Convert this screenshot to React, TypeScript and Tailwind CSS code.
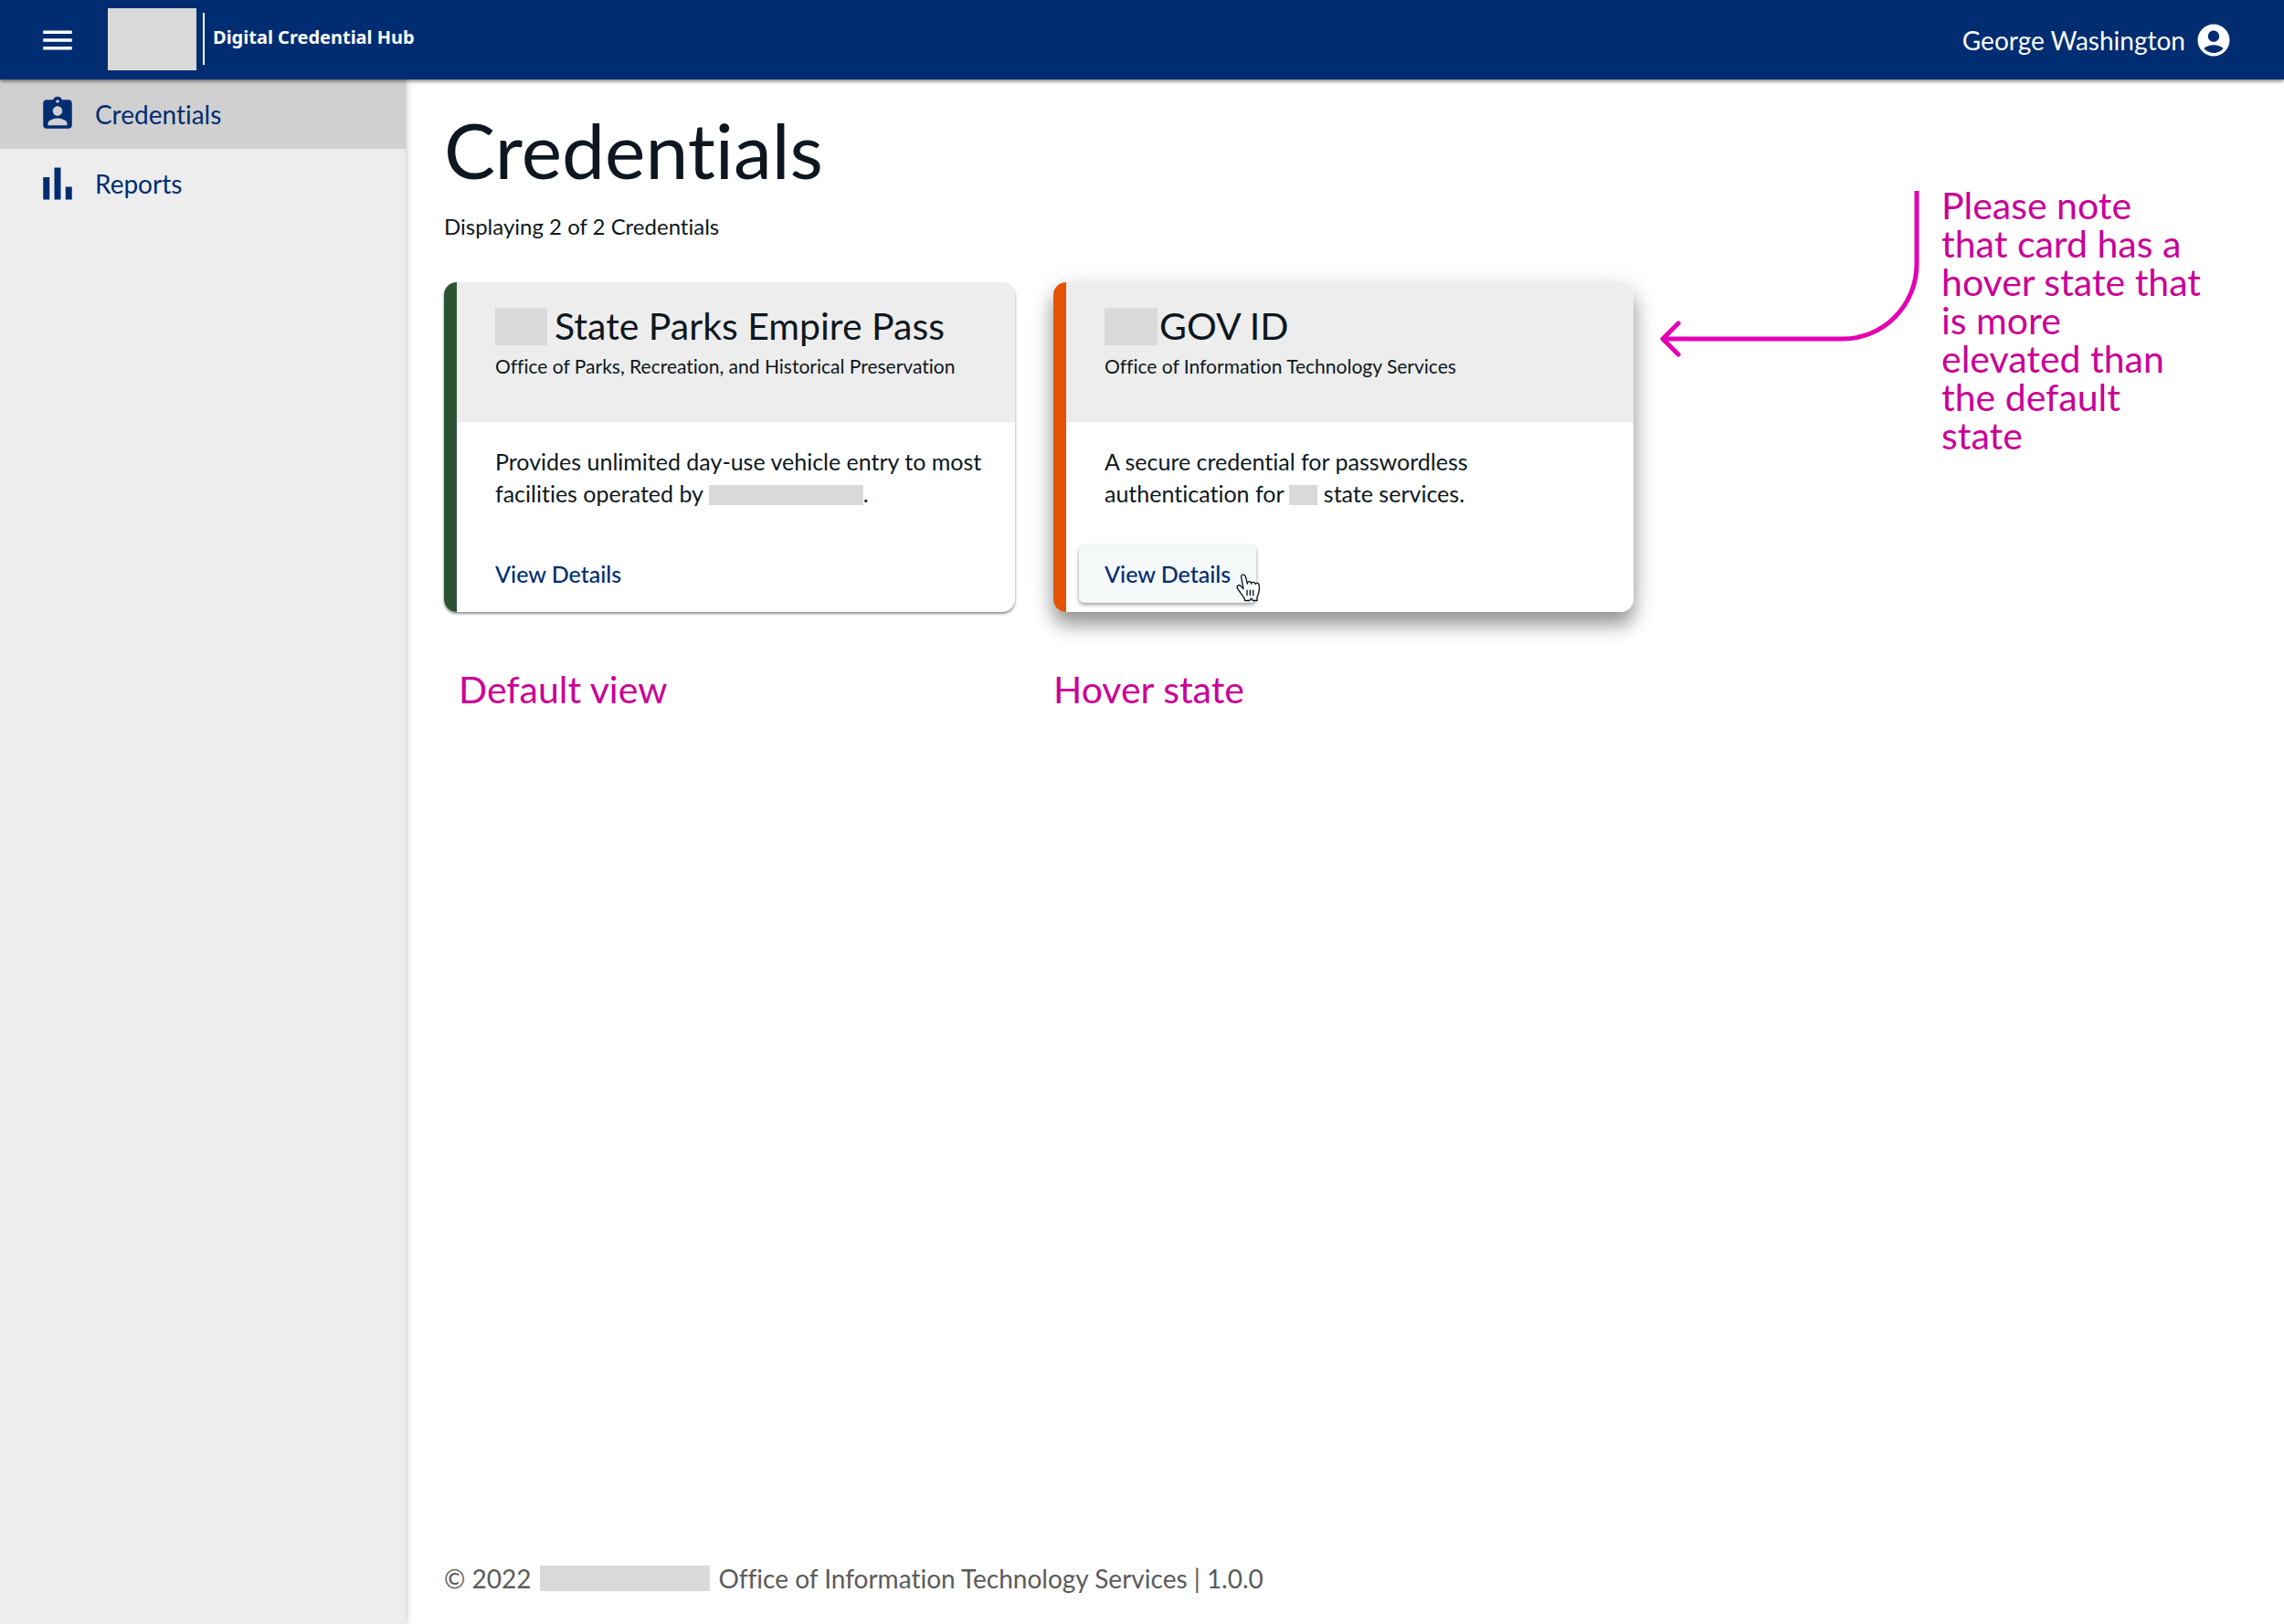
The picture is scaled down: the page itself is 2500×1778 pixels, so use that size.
import type { ReactNode } from 'react';
import { MdAccountCircle, MdAssignmentInd, MdMenu } from 'react-icons/md';

function ReportsIcon() {
  return (
    <svg viewBox="0 0 24 24" className="h-[42px] w-[42px]" fill="currentColor" aria-hidden="true">
      <path d="M3 8h4v14H3zM10 2h4v20h-4zM17 14h4v8h-4z" />
    </svg>
  );
}

function HandCursor() {
  return (
    <svg viewBox="0 0 78 92" className="absolute -right-1 bottom-px h-[31px] w-[26px]" aria-hidden="true">
      <path
        d="M17 12C15 1 28 0 31 9l6 24c0-10 12-10 13 0 2-8 12-7 13 1 3-6 13-4 13 6 1 14 0 22-5 31-3 5-3 9-2 17H55l-5-7-6 7H29c0-8-5-12-10-19L5 49C0 40 9 34 16 41l8 9z"
        fill="#fff"
        stroke="#0e1720"
        strokeWidth="4"
        strokeLinejoin="round"
      />
      <path d="M36 53v19M46 53v19M56 53v19" stroke="#0e1720" strokeWidth="4" fill="none" />
    </svg>
  );
}

function Card({
  stripe,
  className,
  title,
  office,
  children,
  action,
}: {
  stripe: string;
  className: string;
  title: ReactNode;
  office: string;
  children: ReactNode;
  action: ReactNode;
}) {
  return (
    <article className={`flex rounded-[14px] ${className}`}>
      <div className={`w-[14px] shrink-0 rounded-l-[14px] ${stripe}`} />
      <div className="min-w-0 flex-1">
        <div className="h-[153px] rounded-tr-[14px] bg-[#ededed] pt-[25px] pl-[42px]">
          <h2 className="flex items-center text-[41px] leading-[46px] whitespace-nowrap">{title}</h2>
          <p className="mt-[7px] text-[21px] leading-[28px] whitespace-nowrap">{office}</p>
        </div>
        <p className="pt-[26px] pl-[42px] text-[25px] leading-[35px] whitespace-nowrap">{children}</p>
        <div className="px-[14px] pt-[39px] pb-[10px]">{action}</div>
      </div>
    </article>
  );
}

export default function App() {
  return (
    <div className="flex min-h-screen flex-col bg-white font-['Lato',sans-serif] text-[#0e1720] [font-variant-ligatures:none]">
      <header className="relative z-10 flex h-[87px] items-center bg-[#002d72] pr-[56px] pl-[42px] text-white shadow-[0_2px_4px_rgba(0,0,0,0.5)]">
        <button aria-label="Menu">
          <MdMenu className="h-[42px] w-[42px]" />
        </button>
        <div className="mb-[2px] ml-[34px] h-[68px] w-[97px] bg-[#d9d9d9]" />
        <div className="mb-[2px] ml-[7px] h-[57px] w-[2px] bg-white" />
        <span className="ml-[9px] pb-[6px] font-['Noto_Sans',sans-serif] text-[20px] font-bold">
          Digital Credential Hub
        </span>
        <a href="#account" className="ml-auto flex items-center gap-[10px] text-[28px]">
          George Washington
          <MdAccountCircle className="h-[42px] w-[42px]" />
        </a>
      </header>

      <div className="flex flex-1">
        <nav className="w-[444px] shrink-0 bg-[#ededed] text-[28px] text-[#002d72] shadow-[0_0_8px_rgba(0,0,0,0.3)]">
          <a href="#credentials" className="flex h-[76px] items-center gap-[20px] bg-[#d0d0d0] pl-[42px]">
            <MdAssignmentInd className="h-[42px] w-[42px]" />
            Credentials
          </a>
          <a href="#reports" className="flex h-[76px] items-center gap-[20px] pl-[42px]">
            <ReportsIcon />
            Reports
          </a>
        </nav>

        <div className="flex flex-1 flex-col pl-[42px]">
          <div className="flex flex-1">
            <main className="shrink-0 pt-[29px]">
              <h1 className="text-[84px] leading-[96px]">Credentials</h1>
              <p className="mt-[20px] text-[24px] leading-[32px]">Displaying 2 of 2 Credentials</p>
              <div className="mt-[45px] flex gap-[42px]">
                <section className="w-[625px]">
                  <Card
                    stripe="bg-[#2c5234]"
                    className="shadow-[0_2px_3px_rgba(0,0,0,0.45)]"
                    title={
                      <>
                        <span className="mr-[8px] h-[41px] w-[57px] bg-[#d9d9d9]" />
                        State Parks Empire Pass
                      </>
                    }
                    office="Office of Parks, Recreation, and Historical Preservation"
                    action={
                      <button className="h-[63px] px-[28px] text-[25px] font-medium text-[#002d72]">
                        View Details
                      </button>
                    }
                  >
                    Provides unlimited day-use vehicle entry to most
                    <br />
                    facilities operated by{' '}
                    <span className="inline-block h-[22px] w-[169px] bg-[#d9d9d9] align-[-3px]" />.
                  </Card>
                  <p className="mt-[61px] pl-4 text-[41px] leading-[48px] text-[#ca0098]">Default view</p>
                </section>

                <section className="w-[635px]">
                  <Card
                    stripe="bg-[#e35205]"
                    className="shadow-[0_14px_20px_rgba(0,0,0,0.36),0_6px_32px_rgba(0,0,0,0.12)]"
                    title={
                      <>
                        <span className="mr-[2px] h-[41px] w-[58px] bg-[#d9d9d9]" />
                        GOV ID
                      </>
                    }
                    office="Office of Information Technology Services"
                    action={
                      <button className="relative h-[63px] rounded-[6px] bg-[#f4f8f9] px-[28px] text-[25px] font-medium text-[#002d72] shadow-[0_2px_4px_rgba(0,0,0,0.4)]">
                        View Details
                        <HandCursor />
                      </button>
                    }
                  >
                    A secure credential for passwordless
                    <br />
                    authentication for{' '}
                    <span className="inline-block h-[22px] w-[31px] bg-[#d9d9d9] align-[-3px]" /> state services.
                  </Card>
                  <p className="mt-[61px] text-[41px] leading-[48px] text-[#ca0098]">Hover state</p>
                </section>
              </div>
            </main>

            <aside className="ml-[29px] flex flex-1 gap-[24px] pt-[117px]">
              <svg
                viewBox="0 0 284 186"
                className="mt-[5px] h-[186px] w-[284px] shrink-0"
                fill="none"
                stroke="#e400b2"
                strokeWidth="5"
                aria-hidden="true"
              >
                <path d="M281 0v80a81 82 0 0 1-81 82H3" />
                <path d="M20 145L3 162l17 17" strokeLinecap="round" strokeLinejoin="round" />
              </svg>
              <p className="text-[41px] leading-[42px] whitespace-nowrap text-[#ca0098]">
                Please note
                <br />
                that card has a
                <br />
                hover state that
                <br />
                is more
                <br />
                elevated than
                <br />
                the default
                <br />
                state
              </p>
            </aside>
          </div>

          <footer className="flex items-center pb-[34px] text-[28px] leading-[32px] text-[#5b5b5b]">
            © 2022
            <span className="mr-[9px] ml-[10px] h-[28px] w-[186px] bg-[#d9d9d9]" />
            Office of Information Technology Services | 1.0.0
          </footer>
        </div>
      </div>
    </div>
  );
}
